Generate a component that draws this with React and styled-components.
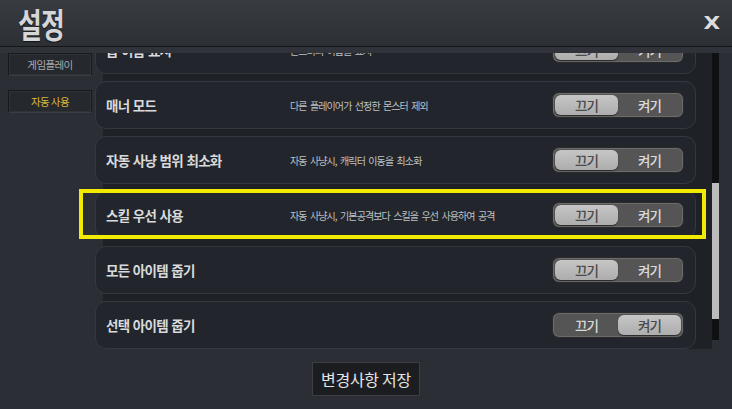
import React from "react";
import styled, { createGlobalStyle } from "styled-components";

const GlobalStyle = createGlobalStyle`
  html, body {
    margin: 0;
    padding: 0;
    background: #2b2f35;
  }
  body {
    font-family: "Noto Sans CJK KR", "Noto Sans", sans-serif;
  }
`;

const options = [
  { title: "몹 이름 표시", desc: "몬스터의 이름을 표시", on: false },
  { title: "매너 모드", desc: "다른 플레이어가 선정한 몬스터 제외", on: false },
  { title: "자동 사냥 범위 최소화", desc: "자동 사냥시, 캐릭터 이동을 최소화", on: false },
  { title: "스킬 우선 사용", desc: "자동 사냥시, 기본공격보다 스킬을 우선 사용하여 공격", on: false },
  { title: "모든 아이템 줍기", desc: "", on: false },
  { title: "선택 아이템 줍기", desc: "", on: true },
];

function App() {
  return (
    <>
      <GlobalStyle />
      <Page>
        <Header>
          <Title>설정</Title>
          <Close>X</Close>
        </Header>
        <Band />
        <Body>
          <Sidebar>
            <Tab>게임플레이</Tab>
            <Tab $active>자동 사용</Tab>
          </Sidebar>
          <Viewport>
            <List>
              {options.map((opt) => (
                <Row key={opt.title}>
                  <RowTitle>{opt.title}</RowTitle>
                  <RowDesc>{opt.desc}</RowDesc>
                  <Toggle>
                    <ToggleHalf $on={!opt.on}>끄기</ToggleHalf>
                    <ToggleHalf $on={opt.on}>켜기</ToggleHalf>
                  </Toggle>
                </Row>
              ))}
            </List>
          </Viewport>
          <Track>
            <Thumb />
          </Track>
          <Highlight />
        </Body>
        <Footer>
          <SaveButton>변경사항 저장</SaveButton>
        </Footer>
      </Page>
    </>
  );
}

const Page = styled.div`
  width: 732px;
  height: 409px;
  display: flex;
  flex-direction: column;
  background: #2b2f35;
  overflow: hidden;
`;

const Header = styled.div`
  height: 46px;
  flex-shrink: 0;
  display: flex;
  align-items: center;
  justify-content: space-between;
  padding: 0 13px 0 18px;
  background: linear-gradient(#383c42, #2c3035);
  border-bottom: 1px solid #131517;
`;

const Title = styled.div`
  font-size: 34px;
  font-weight: 700;
  line-height: 1;
  color: #d4d6d8;
  letter-spacing: -1px;
  transform: scaleX(0.76);
  transform-origin: left center;
  text-shadow: 0 1px 1px #111;
  margin-top: 2px;
`;

const Close = styled.div`
  font-family: "DejaVu Sans", sans-serif;
  font-size: 18px;
  font-weight: 700;
  color: #dcdcdc;
  transform: scaleX(1.2);
  margin-top: -2px;
`;

const Band = styled.div`
  height: 6px;
  flex-shrink: 0;
  background: #30343a;
`;

const Body = styled.div`
  position: relative;
  height: 296px;
  flex-shrink: 0;
  display: flex;
`;

const Sidebar = styled.div`
  width: 95px;
  flex-shrink: 0;
  display: flex;
  flex-direction: column;
  gap: 14px;
  padding-left: 8px;
  box-sizing: border-box;
`;

const Tab = styled.div`
  width: 84px;
  height: 23px;
  box-sizing: border-box;
  display: flex;
  align-items: center;
  justify-content: center;
  background: #25282d;
  border: 1px solid #17191c;
  border-bottom-color: #3a3e44;
  box-shadow: inset 0 0 0 1px #2f3338;
  font-size: 10.5px;
  letter-spacing: -0.6px;
  color: ${(p) => (p.$active ? "#dcb83c" : "#a9abae")};
`;

const Viewport = styled.div`
  width: 617px;
  flex-shrink: 0;
  overflow: hidden;
  background: linear-gradient(90deg, transparent 8px, #1e2126 8px);
`;

const List = styled.div`
  display: flex;
  flex-direction: column;
  gap: 7px;
  margin-top: -27px;
  width: 601px;
`;

const Row = styled.div`
  height: 48px;
  box-sizing: border-box;
  display: grid;
  grid-template-columns: 184px 1fr 132px;
  align-items: center;
  padding: 0 11px 0 10px;
  background: #22262c;
  border: 1px solid #343840;
  border-radius: 11px;
`;

const RowTitle = styled.div`
  font-size: 13.5px;
  font-weight: 700;
  letter-spacing: -0.7px;
  word-spacing: 1px;
  color: #d9dadc;
`;

const RowDesc = styled.div`
  font-size: 10px;
  letter-spacing: -0.9px;
  word-spacing: 2px;
  color: #bfc1c4;
`;

const Toggle = styled.div`
  width: 132px;
  height: 26px;
  box-sizing: border-box;
  display: flex;
  padding: 2px;
  border-radius: 7px;
  background: #555555;
  border: 1px solid #2a2a2a;
  box-shadow: inset 0 0 0 1px #6c6c6c;
`;

const ToggleHalf = styled.div`
  flex: 1;
  display: flex;
  align-items: center;
  justify-content: center;
  border-radius: 6px;
  font-size: 13.5px;
  font-weight: 500;
  letter-spacing: -1px;
  background: ${(p) => (p.$on ? "linear-gradient(#c6c6c6, #adadad)" : "transparent")};
  color: ${(p) => (p.$on ? "#4a4a4a" : "#dadada")};
  box-shadow: ${(p) => (p.$on ? "0 1px 1px #2a2a2a" : "none")};
`;

const Track = styled.div`
  width: 7px;
  height: 287px;
  flex-shrink: 0;
  background: #0e1012;
  display: flex;
  flex-direction: column;
`;

const Thumb = styled.div`
  margin-top: 130px;
  height: 136px;
  background: #bcbcbc;
`;

const Highlight = styled.div`
  position: absolute;
  left: 79px;
  top: 136px;
  width: 627px;
  height: 50px;
  box-sizing: border-box;
  border: 4px solid #f2ea00;
  pointer-events: none;
`;

const Footer = styled.div`
  flex: 1;
  display: flex;
  align-items: flex-start;
  justify-content: center;
  padding-top: 13px;
`;

const SaveButton = styled.div`
  height: 34px;
  box-sizing: border-box;
  display: flex;
  align-items: center;
  padding: 0 8px 1px;
  background: #1b1d20;
  border: 1px solid #3b3e43;
  font-size: 16px;
  letter-spacing: -0.3px;
  color: #e6e6e6;
`;

export default App;
